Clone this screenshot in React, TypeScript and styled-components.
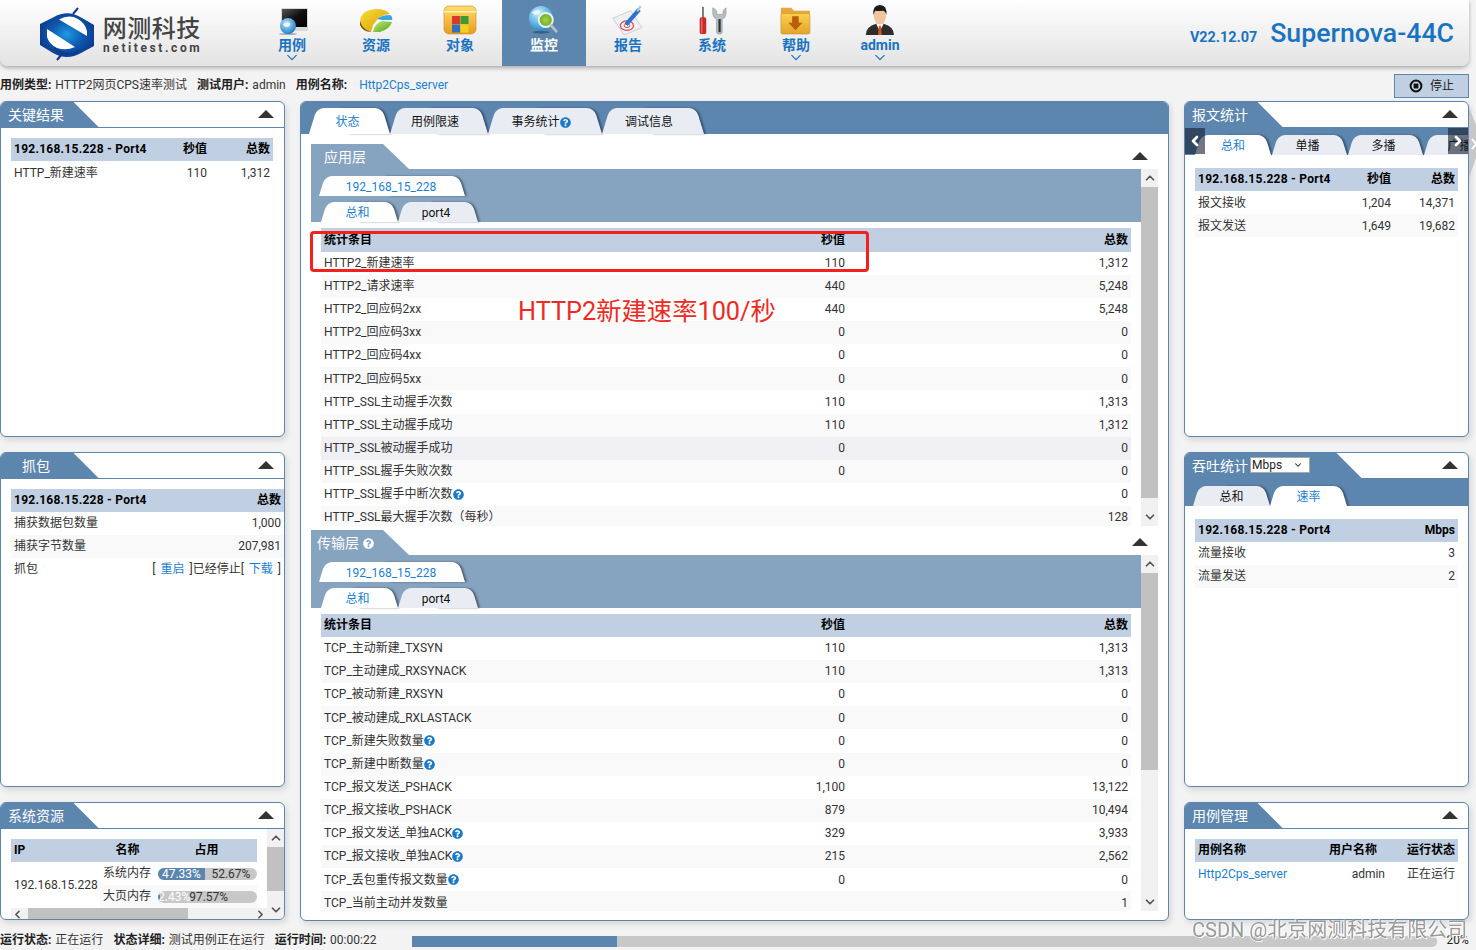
import React from "react";
import styled, { createGlobalStyle, css } from "styled-components";
import { ChevronDown, ChevronUp, ChevronLeft, ChevronRight } from "lucide-react";
import { FaQuestionCircle } from "react-icons/fa";

const BLUE = "#5d86af";
const FONT = `Roboto, "Noto Sans CJK SC", sans-serif`;

const Global = createGlobalStyle`
  html, body { margin: 0; padding: 0; background: #f3f3f3; overflow: hidden; }
  body { font: 12px/1.2 ${FONT}; color: #333; }
  * { box-sizing: border-box; }
`;

const Page = styled.div`
  position: relative; width: 1476px; height: 950px; padding-right: 7px; overflow: hidden;
`;
const Header = styled.header`
  display: flex; align-items: stretch; height: 66px; padding-left: 35px;
  background: linear-gradient(#ffffff, #e3e3e3);
  border-radius: 0 0 8px 8px; box-shadow: 0 2px 4px rgba(0,0,0,.3);
`;
const Logo = styled.div`display: flex; align-items: flex-start; gap: 0; width: 215px; padding-top: 4px;`;
const LogoText = styled.div`display: flex; flex-direction: column; align-items: center; color: #444; margin-top: 13px;`;
const LogoCn = styled.div`font-size: 24px; line-height: 25px; font-weight: 500; letter-spacing: .5px;`;
const LogoEn = styled.div`font-size: 12px; line-height: 13px; font-weight: 700; letter-spacing: 2.6px; padding-left: 2px;`;
const Nav = styled.nav`display: flex;`;
const NavItem = styled.div<{ $active?: boolean }>`
  width: 84px; display: flex; flex-direction: column; align-items: center; padding-top: 5px;
  color: ${p => (p.$active ? "#fff" : "#1a73c0")}; font-size: 14px; font-weight: 700;
  background: ${p => (p.$active ? BLUE : "transparent")};
`;
const NavIcon = styled.div`height: 30px; svg { display: block; height: 30px; width: auto; }`;
const NavLabel = styled.span`line-height: 19px; margin-top: 1px;`;
const NavMore = styled(ChevronDown)`display: block; margin-top: -6px; color: #1a73c0;`;
const Brand = styled.div`
  margin-left: auto; padding: 17px 15px 0 0; display: flex; align-items: baseline; gap: 13px; color: #1a73c0;
`;
const Version = styled.span`font-size: 14.4px; font-weight: 700;`;
const Model = styled.span`font-size: 26.7px; font-weight: 500;`;

const InfoBar = styled.div`display: flex; align-items: center; height: 35px; padding-top: 3px;`;
const InfoItem = styled.span`margin-right: 10px; white-space: nowrap; b { color: #222; margin-right: 1px; }`;
const LinkText = styled.span<{ $ml?: number }>`color: #1a7fd0; margin-left: ${p => p.$ml ?? 0}px;`;
const StopButton = styled.div`
  margin-left: auto; margin-top: 2px; width: 75px; height: 24px; display: flex; align-items: center; justify-content: center; gap: 7px;
  background: #c0d0e2; border: 1px solid ${BLUE}; color: #222;
`;
const Main = styled.main`display: grid; grid-template-columns: 285px 869px 285px; gap: 15px; height: 820px;`;
const Column = styled.div`display: flex; flex-direction: column; gap: 15px;`;
const Panel = styled.section<{ $h?: number }>`
  position: relative; height: ${p => (p.$h ? p.$h + "px" : "100%")}; background: #fff;
  border: 1px solid ${BLUE}; border-radius: 6px; overflow: hidden; box-shadow: 2px 3px 6px rgba(0,0,0,.12);
`;
const PanelHead = styled.div`
  display: flex; align-items: center; justify-content: space-between; height: 26px; padding-right: 10px;
  border-bottom: 1px solid ${BLUE};
`;
const PanelTitle = styled.div<{ $w?: number; $pl?: number }>`
  display: flex; align-items: center; gap: 2px; width: ${p => p.$w ?? 98}px; height: 26px; padding: 2px 0 0 ${p => p.$pl ?? 7}px; background: ${BLUE}; color: #fff;
  font-size: 14px; clip-path: polygon(0 0, calc(100% - 26px) 0, 100% 100%, 0 100%);
`;
const Caret = styled.i`
  display: block; width: 0; height: 0; margin-top: -1px; border-left: 8px solid transparent; border-right: 8px solid transparent; border-bottom: 8px solid #333;
`;
const PanelBody = styled.div<{ $pad?: string }>`padding: ${p => p.$pad ?? "10px 10px 0"};`;

const TabBand = styled.div<{ $pad: number }>`
  display: flex; align-items: flex-end; height: 27px; background: ${BLUE}; padding-left: ${p => p.$pad}px; overflow: hidden;
`;
const half = css`
  content: ""; position: absolute; top: 0; bottom: 0; width: 52%; z-index: -1;
`;
const Tab = styled.div<{ $w: number; $h?: number; $active?: boolean; $ml?: number; $pr?: number }>`
  position: relative; isolation: isolate; flex: none; width: ${p => p.$w}px; height: ${p => p.$h ?? 20}px; margin-left: ${p => p.$ml ?? 0}px;
  padding: 2px ${p => p.$pr ?? 4}px 0 0;
  display: flex; align-items: center; justify-content: center; white-space: nowrap;
  color: ${p => (p.$active ? "#1a7fd0" : "#111")};
  &::before { ${half}; left: 0; background: ${p => (p.$active ? "#fff" : "#e9edf3")};
    border-radius: 7px 0 0 0; transform-origin: bottom left; transform: skewX(-17deg); }
  &::after { ${half}; right: 0; background: ${p => (p.$active ? "#fff" : "#e9edf3")};
    border-radius: 0 7px 0 0; transform-origin: bottom right; transform: skewX(17deg); box-shadow: 2px 0 2px rgba(30,40,60,.55); }
`;
const HelpIcon = styled(FaQuestionCircle)<{ $c?: string }>`color: ${p => p.$c ?? "#1a7ac8"}; font-size: 11px; flex: none;`;

const TableBox = styled.div<{ $w?: number }>`width: ${p => (p.$w ? p.$w + "px" : "100%")};`;
const Row = styled.div<{ $cols: string; $head?: boolean; $alt?: boolean; $hl?: boolean }>`
  display: grid; grid-template-columns: ${p => p.$cols}; align-items: center; height: 23.15px; padding: 0 3px; white-space: nowrap;
  background: ${p => (p.$head ? "#c0d0e2" : p.$hl ? "#efeff4" : p.$alt ? "#f9f9f9" : "#fff")};
  color: ${p => (p.$head ? "#000" : "#333")}; font-weight: ${p => (p.$head ? 700 : 400)};
`;
const Cell = styled.span<{ $r?: boolean; $c?: boolean }>`
  display: flex; align-items: center; justify-content: ${p => (p.$r ? "flex-end" : p.$c ? "center" : "flex-start")}; min-width: 0;
`;
const HostCell = styled(Cell)`letter-spacing: .26px;`;
const Capture = styled.span`color: #1a7fd0; margin: 0 2px;`;

const Strip = styled.div`display: flex; align-items: flex-end; height: 32px; background: ${BLUE}; padding-left: 8px;`;
const Section = styled.div<{ $h: number; $mt: number }>`height: ${p => p.$h}px; margin: ${p => p.$mt}px 10px 0; display: flex; flex-direction: column;`;
const SectionHead = styled.div`display: flex; align-items: center; justify-content: space-between; height: 25px; flex: none; padding-right: 10px;`;
const SectionTitle = styled.div<{ $pl: number }>`
  display: flex; align-items: center; gap: 4px; width: 98px; height: 25px; padding: 1px 0 0 ${p => p.$pl}px; color: #fff; font-size: 14px; background: #86a3bf;
  clip-path: polygon(0 0, 72px 0, 98px 100%, 0 100%);
`;
const SectionBody = styled.div`flex: 1; display: flex; min-height: 0;`;
const SectionMain = styled.div`width: 830px; overflow: hidden;`;
const BandInner = styled.div`height: 53px; background: #86a3bf; display: flex; flex-direction: column; padding-top: 7px; gap: 6px;`;
const BandLine = styled.div<{ $pl: number }>`display: flex; padding-left: ${p => p.$pl}px; height: 20px;`;
const TableWrap = styled.div<{ $top: number }>`padding: ${p => p.$top}px 10px 0;`;

const VBar = styled.div`
  flex: none; width: 17px; background: #f1f1f1; display: flex; flex-direction: column; color: #555;
`;
const BarArrow = styled.div<{ $end?: boolean }>`
  flex: none; height: 18px; display: flex; align-items: center; justify-content: center; ${p => p.$end && "margin-top: auto;"}
`;
const BarThumb = styled.div<{ $h: number }>`flex: none; height: ${p => p.$h}px; background: #c1c1c1;`;

const ArrowBtn = styled.div<{ $right?: boolean }>`
  position: absolute; top: 26px; ${p => (p.$right ? "right: 0;" : "left: 0;")} width: 20px; height: 26px;
  background: rgba(20,30,45,.6); color: #fff; display: flex; align-items: center; justify-content: center;
`;
const Select = styled.div`
  display: flex; align-items: center; justify-content: space-between; width: 60px; height: 16px; margin-top: -3px; padding: 0 6px 0 1px;
  background: #fff; color: #222; border: 1px solid #aaa; font-size: 12px; line-height: 12px;
`;

const ResBox = styled.div`display: flex; height: 90px;`;
const ResMain = styled.div`flex: 1; min-width: 0;`;
const ResBody = styled.div`display: grid; grid-template-columns: 89px 1fr;`;
const ResIp = styled.div`display: flex; align-items: center; padding-left: 3px; height: 46px;`;
const ResRow = styled.div<{ $alt?: boolean }>`
  display: grid; grid-template-columns: 58px 99px; align-items: center; height: 23px; background: ${p => (p.$alt ? "#f9f9f9" : "#fff")};
`;
const ResName = styled.span`padding: 0 0 0 3px;`;
const MiniBar = styled.div`display: flex; height: 12px; border-radius: 6px; overflow: hidden; background: #c8c8c8; line-height: 12px;`;
const MiniFill = styled.div<{ $pct: number }>`
  flex: none; width: ${p => p.$pct}%; background: ${BLUE}; color: #fff; display: flex; justify-content: safe center; white-space: nowrap;
`;
const MiniRest = styled.div`flex: 1; min-width: 0; display: flex; justify-content: center; color: #333; white-space: nowrap;`;
const HScroll = styled.div`display: flex; align-items: center; height: 12px; background: #f1f1f1; color: #555; margin-left: 10px;`;
const HThumb = styled.div`width: 160px; height: 12px; background: #c1c1c1;`;
const HEnd = styled.div`flex: 1; display: flex; justify-content: flex-end;`;
const HStart = styled.div`width: 17px; display: flex;`;

const StatusBar = styled.footer`display: flex; align-items: center; height: 20px; margin-top: 9px; white-space: nowrap;`;
const Progress = styled.div`margin-left: 26px; width: 1025px; height: 11px; margin-top: 2px; border-radius: 0 5px 5px 0; overflow: hidden; background: #c8c8c8;`;
const ProgressFill = styled.div<{ $pct: number }>`width: ${p => p.$pct}%; height: 100%; background: ${BLUE};`;
const Percent = styled.span`margin-left: 9px; color: #222;`;

const RedBox = styled.div`
  position: absolute; left: 310px; top: 231px; width: 559px; height: 41px; border: 3px solid #f3201c; border-radius: 4px; pointer-events: none;
`;
const RedText = styled.div`position: absolute; left: 518px; top: 296px; color: #ee2a24; font-size: 25.3px; line-height: 32px; white-space: nowrap;`;
const Watermark = styled.div`
  position: absolute; left: 1192px; top: 917px; color: rgba(140,140,140,.9); font-size: 20px; line-height: 27px; white-space: nowrap;
  text-shadow: 1px 1px 0 #fff, -1px 0 0 #fff;
`;
const EdgeChevron = styled.svg`position: absolute; left: 1469px; top: 107px;`;

/* ---------- drawings ---------- */
const LogoMark = () => (
  <svg width="66" height="60" viewBox="0 0 66 60">
    <defs>
      <radialGradient id="lg" cx=".5" cy=".48" r=".55">
        <stop offset="0" stopColor="#1b9be3" />
        <stop offset=".55" stopColor="#0f57ae" />
        <stop offset="1" stopColor="#0c3a8c" />
      </radialGradient>
    </defs>
    <path d="M5 20 L19 13 Q33 5 47 14 L59 21 L59 42 L46 49 Q32 57 18 49 L5 41Z" fill="url(#lg)" />
    <path d="M24 15.5 Q34 10 43 15 Q50 19 52 27 L52 32 Z" fill="#fff" />
    <path d="M12 25 L40 43 Q31 47 22 44 Q14 40 12 33 Z" fill="#fff" />
    <path d="M19 44 Q33 55 44 46" stroke="#0c3a8c" strokeWidth="2" fill="none" />
    <path d="M38 10 L43 4 M27 50 L22 56" stroke="#0c3a8c" strokeWidth="2" fill="none" />
  </svg>
);
const IconMonitor = () => (
  <svg width="36" height="30" viewBox="0 0 36 30">
    <defs>
      <linearGradient id="scr" x1="0" y1="0" x2="1" y2="1"><stop offset="0" stopColor="#555" /><stop offset=".5" stopColor="#111" /><stop offset="1" stopColor="#000" /></linearGradient>
      <radialGradient id="gl" cx=".4" cy=".35" r=".7"><stop offset="0" stopColor="#bfe6fb" /><stop offset="1" stopColor="#1478c8" /></radialGradient>
    </defs>
    <rect x="7" y="3" width="27" height="23" fill="#d8d8d8" rx="1" />
    <rect x="8" y="4" width="25" height="18" fill="url(#scr)" />
    <ellipse cx="14" cy="29" rx="9" ry="1" fill="#aab" />
    <circle cx="14" cy="21" r="8" fill="url(#gl)" />
    <path d="M9 19 q4 -3 7 -1 q1 3 -3 4 q-3 0 -4 -3z" fill="#e9f6fd" />
  </svg>
);
const IconPie = () => (
  <svg width="36" height="30" viewBox="0 0 36 30">
    <defs>
      <linearGradient id="py" x1="0" y1="0" x2="1" y2="1"><stop offset="0" stopColor="#f8dd33" /><stop offset="1" stopColor="#d99a05" /></linearGradient>
      <linearGradient id="pg" x1="0" y1="0" x2="1" y2="1"><stop offset="0" stopColor="#c7e871" /><stop offset="1" stopColor="#4fa51d" /></linearGradient>
    </defs>
    <path d="M2 16 Q3 5 18 4 Q28 4 32 9 Q22 9 15 20 L13 27 Q3 24 2 16Z" fill="url(#py)" />
    <path d="M2 16 Q4 24 13 27 Q5 27 2 20Z" fill="#6d5210" />
    <path d="M15 27 Q17 18 24 16 L34 17 Q32 24 22 27 Z" fill="url(#pg)" />
    <path d="M19 14 Q24 10 32 10 Q35 12 34 15 L24 15Z" fill="#35a7e0" />
  </svg>
);
const IconFolderWin = () => (
  <svg width="36" height="30" viewBox="0 0 36 30">
    <defs><linearGradient id="fw" x1="0" y1="0" x2="0" y2="1"><stop offset="0" stopColor="#ffdd6e" /><stop offset="1" stopColor="#e79c1b" /></linearGradient></defs>
    <rect x="2" y="1" width="32" height="28" rx="5" fill="url(#fw)" stroke="#d08a18" strokeWidth=".6" />
    <rect x="2" y="6" width="32" height="1.5" fill="#fff2b8" />
    <rect x="10" y="11" width="8" height="8" fill="#d8392b" />
    <rect x="18.5" y="11" width="8" height="8" fill="#3c9a35" />
    <rect x="10" y="19.5" width="8" height="8" fill="#2f6fc4" />
    <rect x="18.5" y="19.5" width="8" height="8" fill="#f3cf1f" />
  </svg>
);
const IconSearchGlobe = () => (
  <svg width="36" height="32" viewBox="0 0 36 32">
    <defs>
      <radialGradient id="gb" cx=".4" cy=".3" r=".8"><stop offset="0" stopColor="#c8effc" /><stop offset="1" stopColor="#0f86cf" /></radialGradient>
      <radialGradient id="ln" cx=".5" cy=".5" r=".6"><stop offset="0" stopColor="#a7d54a" /><stop offset="1" stopColor="#5e9f1c" /></radialGradient>
    </defs>
    <circle cx="15" cy="14" r="13" fill="url(#gb)" />
    <path d="M5 8 q5 -4 9 -2 q0 4 -5 5z" fill="#e7f7fd" />
    <circle cx="20" cy="16" r="7.5" fill="url(#ln)" stroke="#eaf4f4" strokeWidth="2" />
    <path d="M25 21 L32 29" stroke="#b6c0c6" strokeWidth="3" />
    <ellipse cx="15" cy="29" rx="9" ry="1.6" fill="#3d5f80" />
  </svg>
);
const IconReport = () => (
  <svg width="36" height="32" viewBox="0 0 36 32">
    <polygon points="2,14 21,6 33,24 14,32" fill="#eef0f3" stroke="#b9bec4" strokeWidth=".7" />
    <ellipse cx="17" cy="22" rx="7" ry="5" fill="none" stroke="#d9484a" strokeWidth="1.3" />
    <ellipse cx="17" cy="22" rx="3" ry="2" fill="none" stroke="#d9484a" strokeWidth="1" />
    <path d="M16 21 L30 5" stroke="#2f73c9" strokeWidth="4.5" />
    <path d="M28 7 L31 2 L32 3" stroke="#a9c9ee" strokeWidth="2" fill="none" />
  </svg>
);
const IconTools = () => (
  <svg width="36" height="32" viewBox="0 0 36 32">
    <rect x="7.5" y="2" width="2" height="12" fill="#777" />
    <rect x="5" y="13" width="7" height="18" rx="2" fill="#c92a2a" />
    <rect x="6.5" y="14" width="1.4" height="16" fill="#e56a6a" />
    <path d="M19 3 v7 q1 4 4 5 v14 q0 2 3 2 q3 0 3 -2 v-14 q3 -1 4 -5 v-7 l-3 3 v4 h-7 v-4z" fill="#b9c1c6" stroke="#7d878d" strokeWidth=".6" />
    <rect x="25" y="15" width="2.4" height="14" fill="#333" />
  </svg>
);
const IconFolderDown = () => (
  <svg width="36" height="32" viewBox="0 0 36 32">
    <defs><linearGradient id="fd" x1="0" y1="0" x2="0" y2="1"><stop offset="0" stopColor="#fbd14f" /><stop offset="1" stopColor="#e3a42b" /></linearGradient></defs>
    <path d="M2 3 h11 l3 3 h17 v5 h-31z" fill="#e7a83a" />
    <rect x="2" y="9" width="31" height="22" rx="2" fill="url(#fd)" stroke="#c98d2a" strokeWidth=".6" />
    <path d="M14 12 h7 v7 h4 l-7.5 8 l-7.5 -8 h4z" fill="#b85f0e" />
  </svg>
);
const IconPerson = () => (
  <svg width="36" height="32" viewBox="0 0 36 32">
    <path d="M3 32 Q3 23 14 20 L22 20 Q33 23 33 32Z" fill="#2d2d2d" />
    <polygon points="14,20 22,20 18,28" fill="#fff" />
    <polygon points="17,22 19,22 20,32 16,32" fill="#d9521c" />
    <ellipse cx="18" cy="12" rx="6.5" ry="8.5" fill="#f2c49c" />
    <path d="M11 11 Q10 0 18 0 Q26 0 25 11 Q24 6 21 6 Q16 7 13 6 Q12 8 11 11Z" fill="#1b1b1b" />
  </svg>
);
const StopIcon = () => (
  <svg width="14" height="14" viewBox="0 0 14 14">
    <circle cx="7" cy="7" r="5.4" fill="none" stroke="#111" strokeWidth="2" />
    <rect x="4.6" y="4.6" width="4.8" height="4.8" rx="1" fill="#111" />
  </svg>
);

/* ---------- data ---------- */
const navItems: { label: string; icon: React.ReactNode; active?: boolean; more?: boolean }[] = [
  { label: "用例", icon: <IconMonitor />, more: true },
  { label: "资源", icon: <IconPie /> },
  { label: "对象", icon: <IconFolderWin /> },
  { label: "监控", icon: <IconSearchGlobe />, active: true },
  { label: "报告", icon: <IconReport /> },
  { label: "系统", icon: <IconTools /> },
  { label: "帮助", icon: <IconFolderDown />, more: true },
  { label: "admin", icon: <IconPerson />, more: true },
];
type R = [string, string, string, boolean?];
const appRows: R[] = [
  ["HTTP2_新建速率", "110", "1,312"],
  ["HTTP2_请求速率", "440", "5,248"],
  ["HTTP2_回应码2xx", "440", "5,248"],
  ["HTTP2_回应码3xx", "0", "0"],
  ["HTTP2_回应码4xx", "0", "0"],
  ["HTTP2_回应码5xx", "0", "0"],
  ["HTTP_SSL主动握手次数", "110", "1,313"],
  ["HTTP_SSL主动握手成功", "110", "1,312"],
  ["HTTP_SSL被动握手成功", "0", "0"],
  ["HTTP_SSL握手失败次数", "0", "0"],
  ["HTTP_SSL握手中断次数", "", "0", true],
  ["HTTP_SSL最大握手次数（每秒）", "", "128"],
];
const tcpRows: R[] = [
  ["TCP_主动新建_TXSYN", "110", "1,313"],
  ["TCP_主动建成_RXSYNACK", "110", "1,313"],
  ["TCP_被动新建_RXSYN", "0", "0"],
  ["TCP_被动建成_RXLASTACK", "0", "0"],
  ["TCP_新建失败数量", "0", "0", true],
  ["TCP_新建中断数量", "0", "0", true],
  ["TCP_报文发送_PSHACK", "1,100", "13,122"],
  ["TCP_报文接收_PSHACK", "879", "10,494"],
  ["TCP_报文发送_单独ACK", "329", "3,933", true],
  ["TCP_报文接收_单独ACK", "215", "2,562", true],
  ["TCP_丢包重传报文数量", "0", "0", true],
  ["TCP_当前主动并发数量", "", "1"],
];
const MID = "431px 90px 283px";

const StatsTable = ({ rows, hl, top }: { rows: R[]; hl?: number; top: number }) => (
  <TableWrap $top={top}>
    <Row $cols={MID} $head>
      <Cell>统计条目</Cell><Cell $r>秒值</Cell><Cell $r>总数</Cell>
    </Row>
    {rows.map((r, i) => (
      <Row key={r[0]} $cols={MID} $alt={i % 2 === 1} $hl={i === hl}>
        <Cell>{r[0]}{r[3] && <HelpIcon />}</Cell>
        <Cell $r>{r[1]}</Cell>
        <Cell $r>{r[2]}</Cell>
      </Row>
    ))}
  </TableWrap>
);
const SubTabs = () => (
  <BandInner>
    <BandLine $pl={8}><Tab $w={146} $active $pr={2}>192_168_15_228</Tab></BandLine>
    <BandLine $pl={10}>
      <Tab $w={77} $active>总和</Tab>
      <Tab $w={80}>port4</Tab>
    </BandLine>
  </BandInner>
);
const ScrollY = ({ thumb }: { thumb: number }) => (
  <VBar>
    <BarArrow><ChevronUp size={14} strokeWidth={3} /></BarArrow>
    <BarThumb $h={thumb} />
    <BarArrow $end><ChevronDown size={14} strokeWidth={3} /></BarArrow>
  </VBar>
);

export default function App() {
  return (
    <Page>
      <Global />
      <Header>
        <Logo>
          <LogoMark />
          <LogoText>
            <LogoCn>网测科技</LogoCn>
            <LogoEn>netitest.com</LogoEn>
          </LogoText>
        </Logo>
        <Nav>
          {navItems.map(n => (
            <NavItem key={n.label} $active={n.active}>
              <NavIcon>{n.icon}</NavIcon>
              <NavLabel>{n.label}</NavLabel>
              {n.more && <NavMore size={20} strokeWidth={1.7} />}
            </NavItem>
          ))}
        </Nav>
        <Brand>
          <Version>V22.12.07</Version>
          <Model>Supernova-44C</Model>
        </Brand>
      </Header>

      <InfoBar>
        <InfoItem><b>用例类型:</b> HTTP2网页CPS速率测试</InfoItem>
        <InfoItem><b>测试用户:</b> admin</InfoItem>
        <InfoItem><b>用例名称:</b><LinkText $ml={11}>Http2Cps_server</LinkText></InfoItem>
        <StopButton><StopIcon />停止</StopButton>
      </InfoBar>

      <Main>
        <Column>
          <Panel $h={336}>
            <PanelHead><PanelTitle>关键结果</PanelTitle><Caret /></PanelHead>
            <PanelBody>
              <TableBox $w={262}>
                <Row $cols="133px 60px 63px" $head>
                  <HostCell>192.168.15.228 - Port4</HostCell><Cell $r>秒值</Cell><Cell $r>总数</Cell>
                </Row>
                <Row $cols="133px 60px 63px">
                  <Cell>HTTP_新建速率</Cell><Cell $r>110</Cell><Cell $r>1,312</Cell>
                </Row>
              </TableBox>
            </PanelBody>
          </Panel>
          <Panel $h={335}>
            <PanelHead><PanelTitle $pl={21}>抓包</PanelTitle><Caret /></PanelHead>
            <PanelBody $pad="9.5px 0 0 10px">
              <TableBox $w={273}>
                <Row $cols="1fr 100px" $head>
                  <HostCell>192.168.15.228 - Port4</HostCell><Cell $r>总数</Cell>
                </Row>
                <Row $cols="1fr 100px"><Cell>捕获数据包数量</Cell><Cell $r>1,000</Cell></Row>
                <Row $cols="1fr 100px" $alt><Cell>捕获字节数量</Cell><Cell $r>207,981</Cell></Row>
                <Row $cols="1fr 170px"><Cell>抓包</Cell><Cell $r>[&nbsp;<Capture>重启</Capture>&nbsp;]已经停止[&nbsp;<Capture>下载</Capture>&nbsp;]</Cell></Row>
              </TableBox>
            </PanelBody>
          </Panel>
          <Panel $h={118}>
            <PanelHead><PanelTitle>系统资源</PanelTitle><Caret /></PanelHead>
            <ResBox>
              <ResMain>
                <PanelBody $pad="10px 10px 0">
                  <TableBox $w={246}>
                    <Row $cols="85px 57px 101px" $head>
                      <Cell>IP</Cell><Cell $c>名称</Cell><Cell $c>占用</Cell>
                    </Row>
                  </TableBox>
                  <ResBody>
                    <ResIp>192.168.15.228</ResIp>
                    <div>
                      <ResRow>
                        <ResName>系统内存</ResName>
                        <MiniBar><MiniFill $pct={47.33}>47.33%</MiniFill><MiniRest>52.67%</MiniRest></MiniBar>
                      </ResRow>
                      <ResRow $alt>
                        <ResName>大页内存</ResName>
                        <MiniBar><MiniFill $pct={2.43}>2.43%</MiniFill><MiniRest>97.57%</MiniRest></MiniBar>
                      </ResRow>
                    </div>
                  </ResBody>
                </PanelBody>
                <HScroll>
                  <HStart><ChevronLeft size={13} strokeWidth={3} /></HStart>
                  <HThumb />
                  <HEnd><ChevronRight size={13} strokeWidth={3} /></HEnd>
                </HScroll>
              </ResMain>
              <ScrollY thumb={44} />
            </ResBox>
          </Panel>
        </Column>

        <Panel>
          <Strip>
            <Tab $w={81} $h={26} $active>状态</Tab>
            <Tab $w={98} $h={26} $pr={8}>用例限速</Tab>
            <Tab $w={114} $h={26} $pr={8}>事务统计<HelpIcon /></Tab>
            <Tab $w={102} $h={26} $pr={8}>调试信息</Tab>
          </Strip>
          <Section $h={382} $mt={10}>
            <SectionHead><SectionTitle $pl={13}>应用层</SectionTitle><Caret /></SectionHead>
            <SectionBody>
              <SectionMain>
                <SubTabs />
                <StatsTable rows={appRows} hl={8} top={6.4} />
              </SectionMain>
              <ScrollY thumb={311} />
            </SectionBody>
          </Section>
          <Section $h={381} $mt={4}>
            <SectionHead><SectionTitle $pl={6}>传输层<HelpIcon $c="#fff" /></SectionTitle><Caret /></SectionHead>
            <SectionBody>
              <SectionMain>
                <SubTabs />
                <StatsTable rows={tcpRows} top={5.7} />
              </SectionMain>
              <ScrollY thumb={197} />
            </SectionBody>
          </Section>
        </Panel>

        <Column>
          <Panel $h={336}>
            <PanelHead><PanelTitle>报文统计</PanelTitle><Caret /></PanelHead>
            <TabBand $pad={10}>
              <Tab $w={76} $active $pr={0}>总和</Tab>
              <Tab $w={75} $ml={1}>单播</Tab>
              <Tab $w={75} $ml={1}>多播</Tab>
              <Tab $w={75} $ml={1}>广播</Tab>
            </TabBand>
            <ArrowBtn><ChevronLeft size={16} strokeWidth={4} /></ArrowBtn>
            <ArrowBtn $right><ChevronRight size={16} strokeWidth={4} /></ArrowBtn>
            <PanelBody $pad="13px 10px 0">
              <TableBox>
                <Row $cols="133px 60px 64px" $head>
                  <HostCell>192.168.15.228 - Port4</HostCell><Cell $r>秒值</Cell><Cell $r>总数</Cell>
                </Row>
                <Row $cols="133px 60px 64px"><Cell>报文接收</Cell><Cell $r>1,204</Cell><Cell $r>14,371</Cell></Row>
                <Row $cols="133px 60px 64px" $alt><Cell>报文发送</Cell><Cell $r>1,649</Cell><Cell $r>19,682</Cell></Row>
              </TableBox>
            </PanelBody>
          </Panel>
          <Panel $h={335}>
            <PanelHead>
              <PanelTitle $w={177}>吞吐统计<Select>Mbps<ChevronDown size={10} strokeWidth={2.5} /></Select></PanelTitle>
              <Caret />
            </PanelHead>
            <TabBand $pad={8}>
              <Tab $w={77} $pr={0}>总和</Tab>
              <Tab $w={77} $active $pr={0}>速率</Tab>
            </TabBand>
            <PanelBody $pad="12.5px 10px 0">
              <TableBox>
                <Row $cols="1fr 80px" $head><HostCell>192.168.15.228 - Port4</HostCell><Cell $r>Mbps</Cell></Row>
                <Row $cols="1fr 80px"><Cell>流量接收</Cell><Cell $r>3</Cell></Row>
                <Row $cols="1fr 80px" $alt><Cell>流量发送</Cell><Cell $r>2</Cell></Row>
              </TableBox>
            </PanelBody>
          </Panel>
          <Panel $h={118}>
            <PanelHead><PanelTitle>用例管理</PanelTitle><Caret /></PanelHead>
            <PanelBody>
              <TableBox>
                <Row $cols="1fr 62px 78px" $head>
                  <Cell>用例名称</Cell><Cell $r>用户名称</Cell><Cell $r>运行状态</Cell>
                </Row>
                <Row $cols="1fr 70px 70px">
                  <LinkText>Http2Cps_server</LinkText><Cell $r>admin</Cell><Cell $r>正在运行</Cell>
                </Row>
              </TableBox>
            </PanelBody>
          </Panel>
        </Column>
      </Main>

      <StatusBar>
        <InfoItem><b>运行状态:</b> 正在运行</InfoItem>
        <InfoItem><b>状态详细:</b> 测试用例正在运行</InfoItem>
        <InfoItem><b>运行时间:</b> 00:00:22</InfoItem>
        <Progress><ProgressFill $pct={20} /></Progress>
        <Percent>20%</Percent>
      </StatusBar>

      <RedBox />
      <RedText>HTTP2新建速率100/秒</RedText>
      <Watermark>CSDN @北京网测科技有限公司</Watermark>
      <EdgeChevron width="7" height="71" viewBox="0 0 7 71">
        <polygon points="0,0 7,18 7,51 0,71" fill="#c7c7c7" />
        <path d="M3 32 L7 37 L3 42" stroke="#fff" strokeWidth="2" fill="none" />
      </EdgeChevron>
    </Page>
  );
}
